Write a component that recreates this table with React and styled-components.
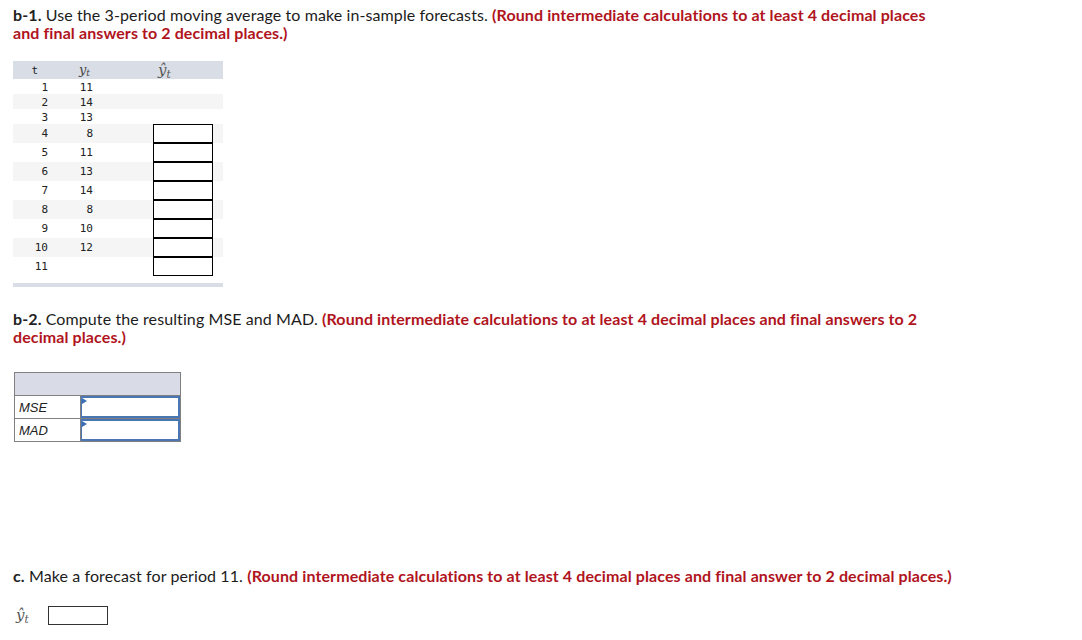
import React from "react";
import styled, { createGlobalStyle } from "styled-components";

const Global = createGlobalStyle`
  body {
    margin: 0;
    background: #fff;
    font-family: Lato, "Open Sans", sans-serif;
    color: #1c1c1c;
  }
`;

const Page = styled.div`
  padding: 6px 13px 0 13px;
`;

const Prompt = styled.p`
  margin: 0;
  font-size: 16px;
  letter-spacing: 0.1px;
  line-height: 18px;
  width: ${(p) => p.width || "930px"};
  b {
    font-weight: 700;
    color: #222;
  }
`;

const Note = styled.span`
  color: #b0141d;
  font-weight: 700;
`;

const ForecastTable = styled.div`
  margin-top: 19px;
  width: 210px;
  font-family: "DejaVu Sans Mono", "Liberation Mono", monospace;
  font-size: 11px;
  color: #222;
`;

const HeadRow = styled.div`
  display: grid;
  grid-template-columns: 35px 45px 1fr;
  height: 18px;
  align-items: center;
  background: #d9dde6;
`;

const HeadCell = styled.div`
  text-align: ${(p) => p.align || "right"};
  padding-right: ${(p) => p.pr || 0}px;
  padding-left: ${(p) => p.pl || 0}px;
`;

const MathVar = styled.span`
  font-family: "DejaVu Serif", "Liberation Serif", serif;
  font-style: italic;
  font-size: ${(p) => p.size || 13}px;
  color: ${(p) => p.color || "#333"};
  sub {
    font-size: 0.7em;
    vertical-align: -0.25em;
  }
`;

const DataRow = styled.div`
  display: grid;
  grid-template-columns: 35px 45px 1fr;
  align-items: center;
  height: ${(p) => (p.$input ? 19 : 15)}px;
  padding-top: ${(p) => (p.$input ? 0 : 1)}px;
  box-sizing: border-box;
  background: ${(p) => (p.$shade ? "#f5f5f5" : "#fff")};
`;

const Num = styled.div`
  text-align: right;
`;

const CellInput = styled.div`
  margin-left: 60px;
  width: 60px;
  height: 19px;
  box-sizing: border-box;
  border: 1px solid #000;
  background: #fff;
`;

const BottomBar = styled.div`
  margin-top: 7px;
  width: 210px;
  height: 4px;
  background: #d9dde6;
`;

const Section = styled.div`
  margin-top: ${(p) => p.mt}px;
`;

const ErrTable = styled.div`
  margin-top: 26px;
  margin-left: 1px;
  width: 167px;
  border: 1px solid #808080;
  box-sizing: border-box;
`;

const ErrHead = styled.div`
  height: 22px;
  background: #d9dce6;
  border-bottom: 1px solid #808080;
`;

const ErrRow = styled.div`
  display: grid;
  grid-template-columns: 66px 1fr;
  height: 22px;
  & + & {
    border-top: 1px solid #808080;
  }
`;

const ErrLabel = styled.div`
  font-family: "Liberation Sans", Arial, sans-serif;
  font-style: italic;
  font-size: 13px;
  color: #222;
  display: flex;
  align-items: center;
  padding-left: 4px;
  border-right: 1px solid #808080;
`;

const BlueInput = styled.div`
  position: relative;
  border: 2px solid #4a77b4;
  border-left-width: 1px;
  background: #fff;
  &::before {
    content: "";
    position: absolute;
    left: 0;
    top: 0;
    border-left: 5px solid #3a6fb5;
    border-top: 3px solid transparent;
    border-bottom: 3px solid transparent;
  }
`;

const AnswerLine = styled.div`
  margin-top: 21px;
  display: flex;
  align-items: center;
  gap: 19px;
  padding-left: 3px;
`;

const PlainInput = styled.div`
  width: 60px;
  height: 19px;
  box-sizing: border-box;
  border: 1px solid #333;
`;

const rows = [
  [1, 11], [2, 14], [3, 13], [4, 8], [5, 11], [6, 13],
  [7, 14], [8, 8], [9, 10], [10, 12], [11, ""],
];

const YHat = ({ size, color }) => (
  <MathVar size={size} color={color}>
    ŷ<sub>t</sub>
  </MathVar>
);

const App = () => (
  <Page>
    <Global />
    <Prompt>
      <b>b-1.</b> Use the 3-period moving average to make in-sample forecasts.{" "}
      <Note>(Round intermediate calculations to at least 4 decimal places and final answers to 2 decimal places.)</Note>
    </Prompt>

    <ForecastTable>
      <HeadRow>
        <HeadCell pr={10}>t</HeadCell>
        <HeadCell pr={3}>
          <MathVar size={13} color="#444">y<sub>t</sub></MathVar>
        </HeadCell>
        <HeadCell align="left" pl={65}>
          <YHat size={15} color="#555" />
        </HeadCell>
      </HeadRow>
      {rows.map(([t, y], i) => (
        <DataRow key={t} $input={t >= 4} $shade={i % 2 === 1}>
          <Num>{t}</Num>
          <Num>{y}</Num>
          {t >= 4 ? <CellInput /> : <div />}
        </DataRow>
      ))}
    </ForecastTable>
    <BottomBar />

    <Section mt={23}>
      <Prompt>
        <b>b-2.</b> Compute the resulting MSE and MAD.{" "}
        <Note>(Round intermediate calculations to at least 4 decimal places and final answers to 2 decimal places.)</Note>
      </Prompt>
      <ErrTable>
        <ErrHead />
        <ErrRow>
          <ErrLabel>MSE</ErrLabel>
          <BlueInput />
        </ErrRow>
        <ErrRow>
          <ErrLabel>MAD</ErrLabel>
          <BlueInput />
        </ErrRow>
      </ErrTable>
    </Section>

    <Section mt={125}>
      <Prompt width="1060px">
        <b>c.</b> Make a forecast for period 11.{" "}
        <Note>(Round intermediate calculations to at least 4 decimal places and final answer to 2 decimal places.)</Note>
      </Prompt>
      <AnswerLine>
        <YHat size={15} color="#555" />
        <PlainInput />
      </AnswerLine>
    </Section>
  </Page>
);

export default App;
